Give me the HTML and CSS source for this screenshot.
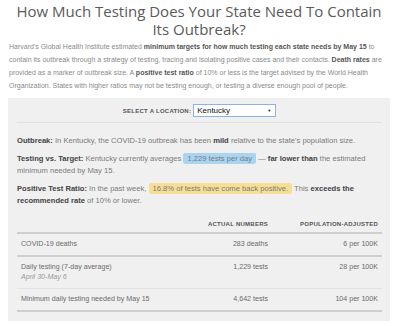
FILE: index.html
```html
<!DOCTYPE html>
<html lang="en">
  <head>
    <meta charset="UTF-8" />
    <meta name="viewport" content="width=device-width, initial-scale=1.0" />
    <title>How Much Testing Does Your State Need</title>
    <link rel="stylesheet" href="styles.css">
  </head>

  <body>
    <h1 class="title">How Much Testing Does Your State Need To Contain Its Outbreak?</h1>

    <p class="intro">
      Harvard's Global Health Institute estimated <b>minimum targets for how much testing each state needs by May 15</b> to<br>
      contain its outbreak through a strategy of testing, tracing and isolating positive cases and their contacts. <b>Death rates</b> are<br>
      provided as a marker of outbreak size. A <b>positive test ratio</b> of 10% or less is the target advised by the World Health<br>
      Organization. States with higher ratios may not be testing enough, or testing a diverse enough pool of people.
    </p>

    <div class="panel">
      <div class="picker">
        <label for="state">Select a location:</label>
        <div class="select" id="state">
          <span>Kentucky</span>
          <span class="arrow">&#9660;</span>
        </div>
      </div>

      <p class="note"><b>Outbreak:</b> In Kentucky, the COVID-19 outbreak has been <b>mild</b> relative to the state's population size.</p>
      <p class="note"><b>Testing vs. Target:</b> Kentucky currently averages <span class="hl blue">1,229 tests per day</span> &mdash; <b>far lower than</b> the estimated minimum needed by May 15.</p>
      <p class="note"><b>Positive Test Ratio:</b> In the past week, <span class="hl yellow">16.8% of tests have come back positive.</span> This <b>exceeds the recommended rate</b> of 10% or lower.</p>

      <table class="stats">
        <thead>
          <tr>
            <th class="label"></th>
            <th class="num">Actual numbers</th>
            <th class="num">Population-adjusted</th>
          </tr>
        </thead>
        <tbody>
          <tr class="major">
            <td class="label">COVID-19 deaths</td>
            <td class="num">283 deaths</td>
            <td class="num">6 per 100K</td>
          </tr>
          <tr>
            <td class="label">Daily testing (7-day average)<br><i>April 30-May 6</i></td>
            <td class="num">1,229 tests</td>
            <td class="num">28 per 100K</td>
          </tr>
          <tr class="major">
            <td class="label">Minimum daily testing needed by May 15</td>
            <td class="num">4,642 tests</td>
            <td class="num">104 per 100K</td>
          </tr>
        </tbody>
      </table>
    </div>
  </body>
</html>
```

FILE: styles.css
```css
body {
  margin: 0;
  padding: 0 10px 0 8px;
  background: white;
  font-family: "Liberation Sans", Arial, sans-serif;
}

h1.title {
  margin: 2px 0 0;
  font-family: "Open Sans", sans-serif;
  font-weight: 400;
  font-size: 15px;
  line-height: 18px;
  color: #5a5a5a;
  text-align: center;
}

p.intro {
  margin: 2px 0 0 1px;
  font-size: 7px;
  line-height: 13px;
  white-space: nowrap;
  color: #8a8a8a;
}

p.intro b {
  color: #555;
}

div.panel {
  margin-top: 6px;
  background-color: #f0f0f0;
  padding: 0 8px 9px 9px;
}

div.picker {
  display: flex;
  justify-content: center;
  align-items: center;
  gap: 2px;
  padding: 6px 0 5px;
  border-bottom: 1px solid #e2e2e2;
}

div.picker label {
  font-size: 6px;
  font-weight: bold;
  letter-spacing: 0.25px;
  text-transform: uppercase;
  color: #555;
}

div.select {
  box-sizing: border-box;
  display: flex;
  justify-content: space-between;
  align-items: center;
  width: 83px;
  height: 13px;
  padding: 0 4px 0 3px;
  background: white;
  border: 1px solid #8cb2e6;
  font-size: 8px;
  color: #111;
}

div.select .arrow {
  font-size: 4px;
}

p.note {
  margin: 12px 0 0;
  font-size: 7.6px;
  line-height: 12px;
  color: #7a7a7a;
}

p.note + p.note {
  margin-top: 6px;
}

p.note b {
  color: #444;
}

span.hl {
  padding: 1px 4px;
  border-radius: 2px;
}

span.blue {
  background: #a9d5f2;
}

span.yellow {
  background: #f6df95;
}

table.stats {
  width: 100%;
  margin-top: 12px;
  border-collapse: collapse;
  font-size: 7.1px;
  color: #6a6a6a;
}

table.stats th {
  padding: 0 4px 3px;
  font-size: 6px;
  font-weight: bold;
  letter-spacing: 0.25px;
  text-transform: uppercase;
  line-height: 10px;
  color: #555;
  border-bottom: 2px solid #cfcfcf;
}

table.stats td {
  padding: 5px 4px 6px;
  line-height: 10px;
  vertical-align: top;
  border-bottom: 1px solid #e4e4e4;
}

table.stats tr.major td {
  border-bottom: 2px solid #cfcfcf;
}

table.stats .label {
  text-align: left;
  width: 157px;
}

table.stats .num {
  text-align: right;
}

table.stats th.num + th.num,
table.stats td.num + td.num {
  width: 102px;
}

table.stats i {
  color: #999;
}
```
